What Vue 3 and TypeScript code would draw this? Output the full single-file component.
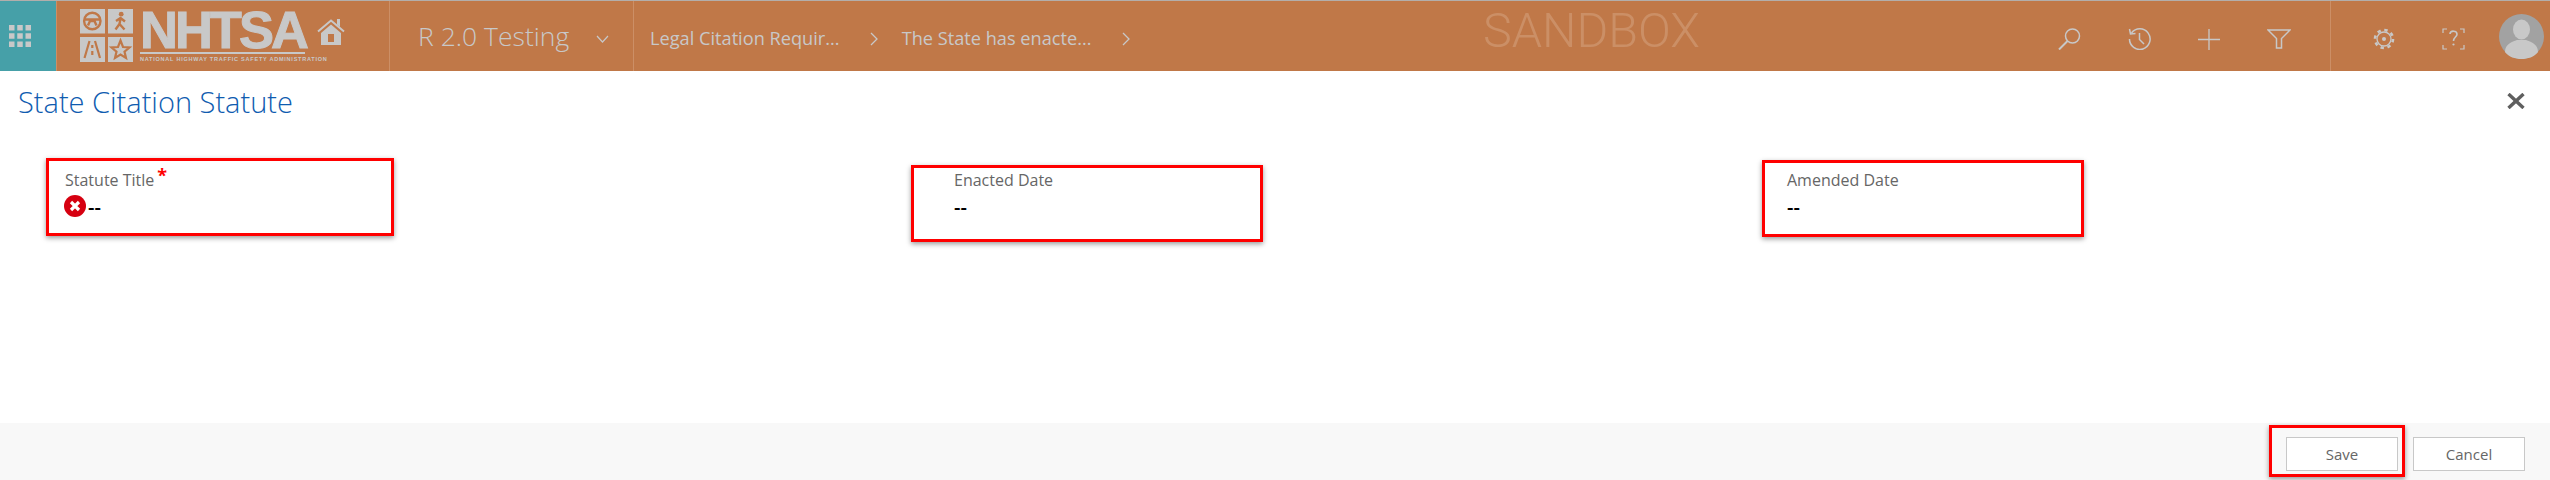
<script setup lang="ts">
interface Field { label: string; required?: boolean; error?: boolean; mark: string }
const fields: Field[] = [
  { label: 'Statute Title', required: true, error: true, mark: 'mark-a' },
  { label: 'Enacted Date', mark: 'mark-b' },
  { label: 'Amended Date', mark: 'mark-c' },
]
</script>

<template>
  <div class="page">
    <header class="nav">
      <div class="launcher">
        <svg width="22" height="22" viewBox="0 0 22 22" fill="#c8c8c8">
          <rect x="0" y="0" width="5.5" height="5.5" /><rect x="8.25" y="0" width="5.5" height="5.5" /><rect x="16.5" y="0" width="5.5" height="5.5" />
          <rect x="0" y="8.25" width="5.5" height="5.5" /><rect x="8.25" y="8.25" width="5.5" height="5.5" /><rect x="16.5" y="8.25" width="5.5" height="5.5" />
          <rect x="0" y="16.5" width="5.5" height="5.5" /><rect x="8.25" y="16.5" width="5.5" height="5.5" /><rect x="16.5" y="16.5" width="5.5" height="5.5" />
        </svg>
      </div>
      <div class="brand">
        <svg class="tiles" width="53" height="53" viewBox="0 0 53 53">
          <rect x="0" y="0" width="25" height="24.5" fill="#c8c8c8" />
          <rect x="28" y="0" width="25" height="24.5" fill="#c8c8c8" />
          <rect x="0" y="28" width="25" height="25" fill="#c8c8c8" />
          <rect x="28" y="28" width="25" height="25" fill="#c8c8c8" />
          <g fill="none" stroke="#c07848">
            <circle cx="12.3" cy="12" r="8.2" stroke-width="2.4" />
            <path d="M4.5 10.5 H20 M8 16.5 L10 12 H14.5 L16.5 16.5" stroke-width="2.4" />
            <path d="M40.5 9.5 L39.5 15 L35.5 20.5 M39.5 15 L44.5 20.5 M36 12 L40.5 9 L45 12.5" stroke-width="2.4" />
            <path d="M9.5 32 L4.5 49 M15 32 L20 49 M12.3 36 V39 M12.3 42 V46" stroke-width="2.2" />
            <path d="M40.5 31.5 L43 38 L49.5 38.5 L44.5 42.6 L46 49 L40.5 45.6 L35 49 L36.5 42.6 L31.5 38.5 L38 38 Z" stroke-width="2.2" />
          </g>
          <circle cx="41.2" cy="5.2" r="2.4" fill="#c07848" />
        </svg>
        <div class="wordmark">
          <span class="word">NHTSA</span>
          <span class="rule"></span>
          <span class="sub">NATIONAL HIGHWAY TRAFFIC SAFETY ADMINISTRATION</span>
        </div>
        <svg class="home" width="28" height="26" viewBox="0 0 28 26">
          <path d="M1 12.5 L14 1.5 L27 12.5" fill="none" stroke="#c8c8c8" stroke-width="2" />
          <path d="M20 0 H23 V8 L20 5.5 Z" fill="#c8c8c8" />
          <path fill-rule="evenodd" d="M4 14 L14 5.5 L24 14 V26 H4 Z M11 15 V23 H17 V15 Z" fill="#c8c8c8" />
        </svg>
      </div>
      <div class="app">
        <span class="app-name">R 2.0 Testing</span>
        <svg class="app-chev" width="13" height="8" viewBox="0 0 13 8" fill="none" stroke="#c8c8c8" stroke-width="1.2"><path d="M1 1 L6.5 7 L12 1" /></svg>
      </div>
      <nav class="crumbs">
        <span class="crumb one">Legal Citation Requir...</span>
        <svg class="chev" width="8" height="14" viewBox="0 0 8 14" fill="none" stroke="#c8c8c8" stroke-width="1.3"><path d="M1 1 L7 7 L1 13" /></svg>
        <span class="crumb two">The State has enacte...</span>
        <svg class="chev" width="8" height="14" viewBox="0 0 8 14" fill="none" stroke="#c8c8c8" stroke-width="1.3"><path d="M1 1 L7 7 L1 13" /></svg>
      </nav>
      <div class="sandbox">SANDBOX</div>
      <div class="actions">
        <svg width="23" height="22" viewBox="0 0 23 22" fill="none" stroke="#c8c8c8" stroke-width="1.5"><circle cx="14.5" cy="8" r="7" /><path d="M9.5 13 L1 21.5" stroke-width="2" /></svg>
        <svg width="23" height="22" viewBox="0 0 23 22" fill="none" stroke="#c8c8c8" stroke-width="1.5"><path d="M3.5 5 A10.3 10.3 0 1 1 1.5 11" /><path d="M1.5 1 L2.5 6 L7.5 5.5" /><path d="M11.5 5 V11.5 L16 16" /></svg>
        <svg width="22" height="21" viewBox="0 0 22 21" fill="none" stroke="#c8c8c8" stroke-width="1.3"><path d="M11 0 V21 M0 10.5 H22" /></svg>
        <svg width="24" height="20" viewBox="0 0 24 20" fill="none" stroke="#c8c8c8" stroke-width="1.5"><path d="M1 1 H23 L14.5 9.5 V19 H9.5 V9.5 Z" /></svg>
      </div>
      <div class="tools">
        <svg width="22" height="22" viewBox="0 0 22 22" fill="none" stroke="#c8c8c8"><circle cx="11" cy="11" r="9" stroke-width="2.6" stroke-dasharray="3.4 3.67" /><circle cx="11" cy="11" r="7" stroke-width="1.3" /><circle cx="11" cy="11" r="2" fill="#c8c8c8" stroke="none" /></svg>
        <svg class="help" width="23" height="22" viewBox="0 0 23 22" fill="none" stroke="#c8c8c8" stroke-width="1.2"><path d="M5 1 H1 V5 M18 1 H22 V5 M5 21 H1 V17 M18 21 H22 V17" /><path d="M8 6 C8.2 2.2 15 2.2 15 6.2 C15 9 11.5 9.2 11.5 13" stroke-width="1.6" /><circle cx="11.5" cy="16.5" r="1.1" fill="#c8c8c8" stroke="none" /></svg>
        <svg class="avatar" width="45" height="45" viewBox="0 0 45 45">
          <circle cx="22.5" cy="22.5" r="22.5" fill="#a2a2a2" />
          <ellipse cx="22.5" cy="15.5" rx="8.5" ry="10" fill="#c8c8c8" />
          <path d="M6 38 C6 30 13 28 18 26 H27 C32 28 39 30 39 38 C35 43 29 45 22.5 45 C16 45 10 43 6 38 Z" fill="#c8c8c8" />
        </svg>
      </div>
    </header>

    <div class="titlebar">
      <h1 class="title">State Citation Statute</h1>
      <svg class="close" width="18" height="16" viewBox="0 0 18 16" stroke="#5f5f5f" stroke-width="3.4"><path d="M1.5 1 L16.5 15 M16.5 1 L1.5 15" /></svg>
    </div>

    <section class="fields">
      <div v-for="f in fields" :key="f.label" class="field">
        <span class="annot" :class="f.mark"></span>
        <div class="label">{{ f.label }}<span v-if="f.required" class="req">*</span></div>
        <div class="value">
          <svg v-if="f.error" class="err" width="22" height="22" viewBox="0 0 22 22">
            <circle cx="11" cy="11" r="11" fill="#d60010" />
            <path d="M7 7 L15 15 M15 7 L7 15" stroke="#fff" stroke-width="3.2" />
          </svg>
          <span>--</span>
        </div>
      </div>
    </section>

    <footer class="foot">
      <button class="btn" type="button">Save<span class="annot mark-s"></span></button>
      <button class="btn" type="button">Cancel</button>
    </footer>
  </div>
</template>

<style>
html, body { margin: 0; background: #fff; }
</style>

<style scoped>
.page {
  width: 2550px;
  height: 480px;
  display: flex;
  flex-direction: column;
  font-family: "Open Sans", "Noto Sans", sans-serif;
  overflow: hidden;
}
.nav {
  height: 71px;
  flex: none;
  display: flex;
  align-items: stretch;
  background: #c07848;
  border-top: 1px solid #b3aeab;
  box-sizing: border-box;
  position: relative;
  color: #c8c8c8;
}
.launcher {
  width: 56px;
  flex: none;
  background: #46a0a8;
  display: flex;
  align-items: center;
  padding-left: 9px;
  box-sizing: border-box;
}
.brand {
  width: 334px;
  flex: none;
  display: flex;
  align-items: flex-start;
  box-sizing: border-box;
  padding: 8px 0 0 23px;
  border-left: 1px solid #cc8f66;
  border-right: 1px solid #cc8f66;
}
.tiles { flex: none; }
.wordmark {
  display: flex;
  flex-direction: column;
  margin-left: 7px;
  width: 165px;
  flex: none;
}
.word {
  font-family: "Liberation Sans", Arial, sans-serif;
  font-weight: 700;
  font-size: 52.5px;
  line-height: 41px;
  height: 41px;
  letter-spacing: -3px;
  -webkit-text-stroke: 1px #c8c8c8;
  white-space: nowrap;
}
.rule { height: 2px; background: #c8c8c8; margin-top: 2px; }
.sub {
  font-family: "Liberation Sans", sans-serif;
  font-weight: 700;
  font-size: 5.6px;
  line-height: 10px;
  letter-spacing: .72px;
  white-space: nowrap;
}
.home { margin: 10px 0 0 12px; flex: none; }
.app {
  width: 244px;
  flex: none;
  box-sizing: border-box;
  display: flex;
  align-items: center;
  padding-left: 28px;
  border-right: 1px solid #cc8f66;
}
.app-name { font-size: 26.5px; font-weight: 300; width: 178px; white-space: nowrap; flex: none; }
.app-chev { margin-top: 5px; }
.crumbs { display: flex; align-items: center; padding: 3px 0 0 16px; flex: none; }
.crumb { font-size: 18.2px; font-weight: 400; white-space: nowrap; }
.chev { margin: 3px 24px 0 30px; flex: none; }
.sandbox {
  position: absolute;
  left: 1483px;
  top: 1px;
  font-family: Roboto, "Open Sans", sans-serif;
  font-size: 48.5px;
  font-weight: 300;
  color: #cb8f66;
}
.actions {
  margin-left: auto;
  display: flex;
  align-items: center;
  gap: 47px;
  padding: 6px 39px 0 0;
  border-right: 1px solid #cc8f66;
}
.tools {
  width: 219px;
  flex: none;
  display: flex;
  align-items: center;
  padding-left: 42px;
  box-sizing: border-box;
}
.help { margin-left: 47px; }
.tools > svg:not(.avatar) { margin-top: 6px; }
.avatar { margin-left: 34px; }
.titlebar {
  display: flex;
  align-items: center;
  justify-content: space-between;
  height: 58px;
  flex: none;
  padding: 2px 25px 0 18px;
  box-sizing: border-box;
}
.title {
  margin: 0;
  font-size: 29px;
  font-weight: 300;
  color: #0f5cb0;
}
.fields {
  flex: 1;
  display: grid;
  grid-template-columns: 889px 833px 1fr;
  padding: 41px 0 0 65px;
  align-content: start;
}
.field { position: relative; }
.label { font-size: 16px; line-height: 20px; color: #666; }
.req { color: #f00; font-size: 18px; font-weight: 700; line-height: 10px; margin-left: 3px; vertical-align: 4px; }
.value {
  display: flex;
  align-items: center;
  height: 24px;
  margin-top: 4px;
  font-size: 20px;
  font-weight: 600;
  color: #000;
}
.err { margin: 0 2px 0 -1px; flex: none; }
.annot {
  position: absolute;
  box-sizing: border-box;
  border: 3px solid #f00;
  box-shadow: 0 2px 5px rgba(0,0,0,.4);
  pointer-events: none;
}
.mark-a { left: -19px; top: -12px; width: 348px; height: 78px; }
.mark-b { left: -43px; top: -5px; width: 352px; height: 77px; }
.mark-c { left: -25px; top: -10px; width: 322px; height: 77px; }
.foot {
  height: 57px;
  flex: none;
  background: #f8f8f8;
  display: flex;
  justify-content: flex-end;
  align-items: flex-start;
  gap: 15px;
  padding: 14px 25px 0 0;
  box-sizing: border-box;
}
.btn {
  position: relative;
  width: 112px;
  height: 34px;
  box-sizing: border-box;
  background: #fff;
  border: 1px solid #c8c8c8;
  font: 15px "Open Sans", sans-serif;
  color: #666;
  padding: 0;
}
.mark-s { left: -18px; top: -13px; width: 136px; height: 52px; }
</style>
